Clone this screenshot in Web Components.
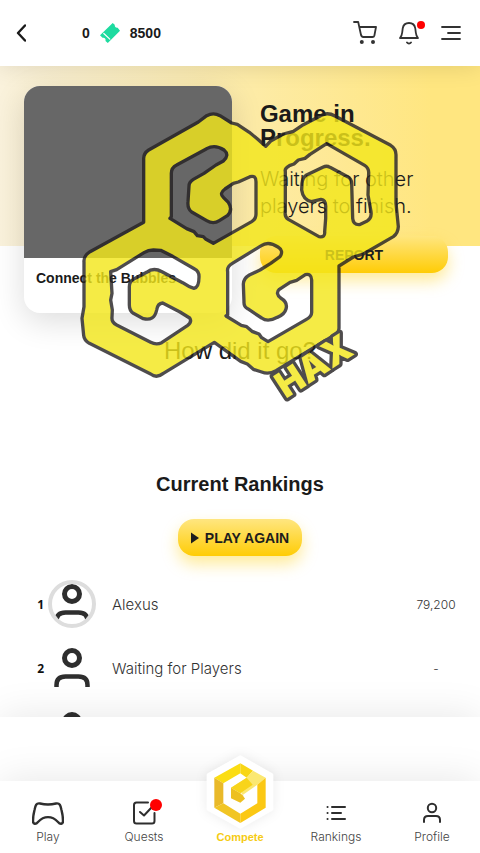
<!DOCTYPE html>
<html lang="en">
<head>
<meta charset="utf-8">
<meta name="viewport" content="width=device-width, initial-scale=1">
<title>Compete</title>
<style>
    body {
        margin: 0;
        background: white;
        color: #1a1a1a;
        font-family: "Liberation Sans", Arial, sans-serif;
    }
</style>
</head>
<body>
<compete-page></compete-page>

<template id="header-template">
<style>
    :host {
        display: block;
        position: relative;
        z-index: 2;
        background: white;
        box-shadow: 0 0 24px rgba(0, 0, 0, .12);
    }
    header {
        display: flex;
        align-items: center;
        height: 66px;
        padding: 0 19px 0 16px;
    }
    button {
        display: block;
        position: relative;
        padding: 0;
        border: 0;
        background: none;
        color: #333;
        cursor: pointer;
    }
    svg {
        display: block;
        fill: none;
        stroke: currentColor;
        stroke-width: 2;
        stroke-linecap: round;
        stroke-linejoin: round;
    }
    .back {
        color: #1a1a1a;
        margin-right: 56px;
    }
    .wallet {
        display: flex;
        align-items: center;
        gap: 10px;
        flex: 1;
        font-size: 14px;
        font-weight: bold;
    }
    .ticket {
        fill: #1edba0;
        stroke: none;
    }
    .actions {
        display: flex;
        gap: 22px;
    }
    .dot {
        position: absolute;
        top: 0;
        right: -6px;
        width: 8px;
        height: 8px;
        border-radius: 50%;
        background: red;
    }
</style>
<header>
    <button class="back" aria-label="Back">
        <svg width="10" height="18" viewBox="0 0 10 18"><path d="M9 1.500L2 9l7 7.500" stroke-width="2.400"/></svg>
    </button>
    <div class="wallet">
        <span>0</span>
        <svg class="ticket" width="20" height="20" viewBox="0 0 20 20">
            <path d="M12.700 0l2 1.800c0 2 1 3.300 3 3L20 7.700 7.800 20 5.500 18c.6-2-.8-3.700-3-3.200L0 12.300z"/>
            <path d="M3.800 10.500l6 5.600" stroke="white" stroke-width="1.200"/>
        </svg>
        <span>8500</span>
    </div>
    <div class="actions">
        <button aria-label="Cart">
            <svg width="24" height="24" viewBox="0 0 24 24" stroke-width="1.800">
                <path d="M1 1h4.200l2.600 12q.5 3 2.500 3h9.200q1.500 0 1.900-1.500L23 6H6.500" stroke-width="1.800"/>
                <circle cx="8.800" cy="21" r="1" fill="currentColor"/>
                <circle cx="20" cy="21" r="1" fill="currentColor"/>
            </svg>
        </button>
        <button aria-label="Notifications">
            <svg width="20" height="24" viewBox="0 0 20 24">
                <path d="M1 17h18c-1.700-2-2-3.200-2.200-5.500l-.5-4C15.800 4 13.500 2 10 2S4.200 4 3.700 7.500l-.5 4c-.2 2.300-.5 3.500-2.200 5.500zM8 21.500c1 1.300 3 1.300 4 0" stroke-width="1.800"/>
            </svg>
            <span class="dot"></span>
        </button>
        <button aria-label="Menu">
            <svg width="20" height="24" viewBox="0 0 20 24"><path d="M1 6h18M7 12h12M1 18h18" stroke-width="1.800"/></svg>
        </button>
    </div>
</header>
</template>

<template id="button-template">
<style>
    :host {
        display: inline-block;
    }
    button {
        display: flex;
        align-items: center;
        justify-content: center;
        gap: 6px;
        width: 100%;
        height: 37px;
        padding: 0 13px;
        border: 0;
        border-radius: 16px;
        background: linear-gradient(#ffe680, #ffcc05);
        box-shadow: 0 8px 16px rgba(255, 204, 0, .4);
        color: #1d1d1d;
        font: bold 14px "Liberation Sans", Arial, sans-serif;
        cursor: pointer;
    }
</style>
<button><slot></slot></button>
</template>

<template id="card-template">
<style>
    :host {
        display: block;
        overflow: hidden;
        border-radius: 16px;
        background: white;
        box-shadow: 0 8px 32px rgba(0, 0, 0, .14);
    }
    .cover {
        height: 172px;
        background: #676767;
    }
    .name {
        min-height: 31px;
        padding: 12px;
        font-size: 14px;
        font-weight: bold;
        line-height: 16px;
    }
</style>
<div class="cover"></div>
<div class="name"><slot></slot></div>
</template>

<template id="logo-template">
<style>
    :host {
        display: block;
        opacity: .81;
        pointer-events: none;
    }
    svg {
        display: block;
        width: 100%;
        overflow: visible;
    }
    path {
        fill: #f3e71b;
        fill-rule: evenodd;
        stroke: #262324;
        stroke-width: 10;
        stroke-linejoin: round;
    }
    text {
        fill: #f3e71b;
        stroke: #262324;
        stroke-width: 20;
        stroke-linejoin: round;
        paint-order: stroke;
        font: 900 107px Inter, sans-serif;
    }
</style>
<svg viewBox="240 150 960 885">
    <path d="M620 167Q640 156 660 167L695 189L712 193L748 217L770 235L797 259L812 243L850 222L880 214L910 194L962 167Q982 155 1005 168L1172 256Q1188 266 1188 284V430L1195 500Q1194 520 1180 530L1090 582L1060 591L1017 618V802Q1018 816 1005 824L828 932Q806 944 785 936L760 928L742 912L722 904L643 847L490 940Q470 956 452 942L268 850Q252 840 251 826L246 775L252 740V606Q250 588 270 575L431 487V295Q431 280 446 270L595 186Z
        M620 266L530 315Q514 323 514 340V470L510 475L560 506L582 515L592 527L610 530L618 538L640 550L755 485Q768 477 768 462V365Q768 345 750 350L715 366L700 370L675 387Q657 400 670 412L685 427Q700 450 682 467L658 482Q640 494 620 482L575 456Q562 446 564 425L567 378Q567 366 580 358L612 340L648 315L670 303Q690 285 672 270Q645 252 620 266Z
        M980 251L1094 316Q1107 324 1106 340L1104 405L1113 455Q1116 475 1100 484L1078 494Q1060 495 1058 475L1055 370Q1055 357 1043 350L990 322Q980 316 970 321L918 346Q907 354 906 370L905 390Q909 419 934 425L963 418Q979 420 977 445V475L974 515Q976 533 957 530L865 478Q853 470 856 455V335Q853 325 868 317L882 312L895 300L915 295L930 283Z
        M460 570L482 571L518 589L584 627Q598 634 597 652Q597 683 582 685Q565 680 548 668L486 635Q460 621 440 637L400 658Q388 665 388 680V735Q388 752 400 760L430 776Q463 784 470 750Q473 730 488 729L540 756L569 774Q577 786 562 797L485 848Q469 856 452 847L350 795Q334 787 336 771L337 750L332 720L336 700L332 635L350 629L432 578Q445 570 460 570Z
        M784 557L697 610Q680 620 683 635V765L678 768L724 796L740 800L756 814L777 822L785 833L804 845L918 779Q936 769 935 755V660Q934 640 916 644L890 661L870 667L838 688Q825 700 842 714Q864 727 858 747Q854 763 832 772Q803 788 785 774L743 746Q731 740 732 725L730 672Q731 655 748 645L780 630L812 610L840 590Q852 572 834 561Q805 542 784 557Z"/>
    <text transform="translate(857 1017) rotate(-33)">HAX</text>
</svg>
</template>

<template id="summary-template">
<style>
    :host {
        display: block;
        position: relative;
    }
    .hero {
        display: grid;
        grid-template-columns: 21fr 19fr;
        align-items: start;
        gap: 28px;
        padding: 20px 32px 24px 24px;
        background: linear-gradient(to right, #faf2dc, #ffe680 90%) no-repeat;
        background-size: 100% 180px;
    }
    .status {
        display: flex;
        flex-direction: column;
        padding-top: 16px;
    }
    h1 {
        margin: 0;
        font-size: 24px;
        line-height: 24px;
    }
    p {
        margin: 16px 0;
        font-family: Inter, sans-serif;
        font-size: 20px;
        font-weight: 300;
        line-height: 27px;
    }
    h2 {
        margin: 0;
        font-size: 24px;
        font-weight: normal;
        line-height: 28px;
        text-align: center;
    }
    .feedback {
        min-height: 107px;
    }
    guild-logo {
        position: absolute;
        top: 44px;
        left: 50%;
        width: 320px;
        margin-left: -160px;
    }
</style>
<section class="hero">
    <game-card>Connect the Bubbles</game-card>
    <div class="status">
        <h1>Game in Progress.</h1>
        <p>Waiting for other players to finish.</p>
        <gold-button>REPORT</gold-button>
    </div>
</section>
<h2>How did it go?</h2>
<div class="feedback"></div>
<guild-logo></guild-logo>
</template>

<template id="avatar-template">
<style>
    :host {
        display: block;
        box-sizing: border-box;
        width: 48px;
        height: 48px;
        overflow: hidden;
        border: 4px solid transparent;
        border-width: 0 4px;
    }
    :host([ring]) {
        border: 4px solid #ddd;
        border-radius: 50%;
    }
    svg {
        display: block;
        margin: 0 -4px;
        fill: none;
        stroke: #2e2e2e;
        stroke-width: 5;
    }
    :host([ring]) svg {
        margin: -4px;
    }
</style>
<svg width="48" height="48" viewBox="0 0 48 48">
    <circle cx="24" cy="14" r="7.500"/>
    <path d="M8.500 43v-2q0-8.500 9-8.500h13q9 0 9 8.500v2" stroke-width="4.500"/>
</svg>
</template>

<template id="rankings-template">
<style>
    :host {
        display: flex;
        flex-direction: column;
        align-items: center;
    }
    h2 {
        margin: 0 0 23px;
        font-size: 20px;
        line-height: 24px;
    }
    gold-button svg {
        display: block;
    }
    table {
        width: 100%;
        margin-top: 16px;
        padding: 0 24px;
        border-spacing: 0;
    }
    td {
        height: 64px;
        padding: 0;
        font-family: Inter, sans-serif;
        font-size: 15px;
        font-weight: 300;
        color: #333;
    }
    .place {
        width: 20px;
        padding-right: 4px;
        font: bold 12px "Open Sans", sans-serif;
        text-align: right;
        color: #111;
    }
    .photo {
        width: 64px;
    }
    .score {
        width: 40px;
        font-size: 12px;
        text-align: center;
        white-space: nowrap;
    }
</style>
<h2>Current Rankings</h2>
<gold-button>
    <svg width="8" height="12" viewBox="0 0 8 12"><path d="M0 .5l8 5.500-8 5.500z" fill="#1d1d1d"/></svg>
    PLAY AGAIN
</gold-button>
<table aria-label="Current Rankings"><tbody></tbody></table>
</template>

<template id="tab-template">
<style>
    :host {
        display: block;
        flex: 1 1 0;
    }
    a {
        display: flex;
        flex-direction: column;
        align-items: center;
        gap: 4px;
        color: #444;
        font-family: Inter, sans-serif;
        font-size: 12px;
        font-weight: 300;
        line-height: 16px;
        text-decoration: none;
    }
    :host([active]) a {
        color: #f5cb14;
        font-family: "Liberation Sans", Arial, sans-serif;
        font-size: 11px;
        font-weight: bold;
    }
    .icon {
        position: relative;
        display: flex;
        justify-content: center;
        width: 32px;
        height: 24px;
    }
    :host([badge]) .icon::after {
        content: "";
        position: absolute;
        top: -2px;
        right: -2px;
        width: 12px;
        height: 12px;
        border-radius: 50%;
        background: red;
    }
</style>
<a href="#">
    <span class="icon"><slot name="icon"></slot></span>
    <slot></slot>
</a>
</template>

<template id="tabs-template">
<style>
    :host {
        display: block;
        background: white;
        box-shadow: 0 0 40px rgba(0, 0, 0, .1);
    }
    nav {
        display: flex;
        padding: 20px 0 8px;
    }
    svg {
        display: block;
        flex: none;
        fill: none;
        stroke: #2e2e2e;
        stroke-width: 2;
        stroke-linecap: round;
        stroke-linejoin: round;
    }
    .emblem {
        align-self: flex-end;
        margin-bottom: -4px;
        stroke: none;
        filter: drop-shadow(0 0 6px rgba(0, 0, 0, .08));
    }
</style>
<nav>
    <nav-tab>
        <svg slot="icon" width="32" height="24" viewBox="0 0 32 24">
            <path d="M8 2.500Q16 4.500 24 2.500C28 1.800 28.500 4.500 29.500 9C30.500 13 31 17 31 20C31 23.500 28 23.500 26 21C20 14.500 12 14.500 6 21C4 23.500 1 23.500 1 20C1 17 1.500 13 2.500 9C3.500 4.500 4 1.800 8 2.500Z" stroke-width="2.400"/>
        </svg>
        Play
    </nav-tab>
    <nav-tab badge>
        <svg slot="icon" width="24" height="24" viewBox="0 0 24 24">
            <path d="M16 1.500H4.500q-2.500 0-2.500 2.500v16q0 2.500 2.500 2.500H20q2.500 0 2.500-2.500v-8M8 11l4 3.500 8-8.500"/>
        </svg>
        Quests
    </nav-tab>
    <nav-tab active>
        <svg slot="icon" class="emblem" width="68" height="76" viewBox="50 36 204 228">
            <path d="M153 47L248 101V205L153 259L56 205V101Z" fill="white" stroke="white" stroke-width="8"/>
            <path d="M153 67L75 110L102 127L153 97Z" fill="#fbdd12"/>
            <path d="M153 67L191 89L172 110L153 97Z" fill="#f8d615"/>
            <path d="M191 89L229 110L204 131L160 162L153 150L125 140L172 110Z" fill="#fbe872"/>
            <path d="M172 110L125 140L153 157L190 131Z" fill="#f8d41a"/>
            <path d="M75 110L102 127V187L75 200Z" fill="#e9b92a"/>
            <path d="M75 200L102 187L153 218V246Z" fill="#f1c524"/>
            <path d="M229 110V200L153 246V218L204 187V131Z" fill="#fbc814"/>
            <path d="M125 140L153 157L160 163L167 173L153 185L125 172Z" fill="#edc020"/>
        </svg>
        Compete
    </nav-tab>
    <nav-tab>
        <svg slot="icon" width="24" height="24" viewBox="0 0 24 24">
            <path d="M8 6h13M8 12h9M8 18h13M3.500 6h.1M3.500 12h.1M3.500 18h.1"/>
        </svg>
        Rankings
    </nav-tab>
    <nav-tab>
        <svg slot="icon" width="24" height="24" viewBox="0 0 24 24">
            <circle cx="12" cy="7" r="4.200"/>
            <path d="M4 21v-2q0-4 4-4h8q4 0 4 4v2"/>
        </svg>
        Profile
    </nav-tab>
</nav>
</template>

<template id="page-template">
<style>
    :host {
        display: flex;
        flex-direction: column;
        height: 100vh;
    }
    main {
        flex: 1;
        min-height: 0;
        overflow: hidden;
    }
    .banner {
        height: 64px;
        background: white;
        box-shadow: 0 0 40px rgba(0, 0, 0, .1);
    }
    .banner, tab-bar {
        position: relative;
        z-index: 1;
    }
</style>
<app-header></app-header>
<main>
    <game-summary></game-summary>
    <current-rankings></current-rankings>
</main>
<div class="banner"></div>
<tab-bar></tab-bar>
</template>

<script>
class BaseElement extends HTMLElement {
    constructor() {
        super()
        const template = document.getElementById(this.constructor.template)
        this.attachShadow({ mode: "open" })
        this.shadowRoot.appendChild(template.content.cloneNode(true))
    }
}

class AppHeader extends BaseElement {
    static template = 'header-template'
}

class GoldButton extends BaseElement {
    static template = 'button-template'
}

class GameCard extends BaseElement {
    static template = 'card-template'
}

class GuildLogo extends BaseElement {
    static template = 'logo-template'
}

class GameSummary extends BaseElement {
    static template = 'summary-template'
}

class UserAvatar extends BaseElement {
    static template = 'avatar-template'
}

class CurrentRankings extends BaseElement {
    static template = 'rankings-template'

    connectedCallback() {
        const players = [
            { place: 1, name: 'Alexus', score: '79,200', joined: true },
            { place: 2, name: 'Waiting for Players', score: '-' },
            { place: '', name: '', score: '' }
        ]
        this.shadowRoot.querySelector('tbody').innerHTML = players.map(player => `
            <tr>
                <td class="place">${player.place}</td>
                <td class="photo"><user-avatar ${player.joined ? 'ring' : ''}></user-avatar></td>
                <td>${player.name}</td>
                <td class="score">${player.score}</td>
            </tr>`).join('')
    }
}

class NavTab extends BaseElement {
    static template = 'tab-template'
}

class TabBar extends BaseElement {
    static template = 'tabs-template'
}

class CompetePage extends BaseElement {
    static template = 'page-template'
}

customElements.define('app-header', AppHeader)
customElements.define('gold-button', GoldButton)
customElements.define('game-card', GameCard)
customElements.define('guild-logo', GuildLogo)
customElements.define('game-summary', GameSummary)
customElements.define('user-avatar', UserAvatar)
customElements.define('current-rankings', CurrentRankings)
customElements.define('nav-tab', NavTab)
customElements.define('tab-bar', TabBar)
customElements.define('compete-page', CompetePage)
</script>
</body>
</html>
